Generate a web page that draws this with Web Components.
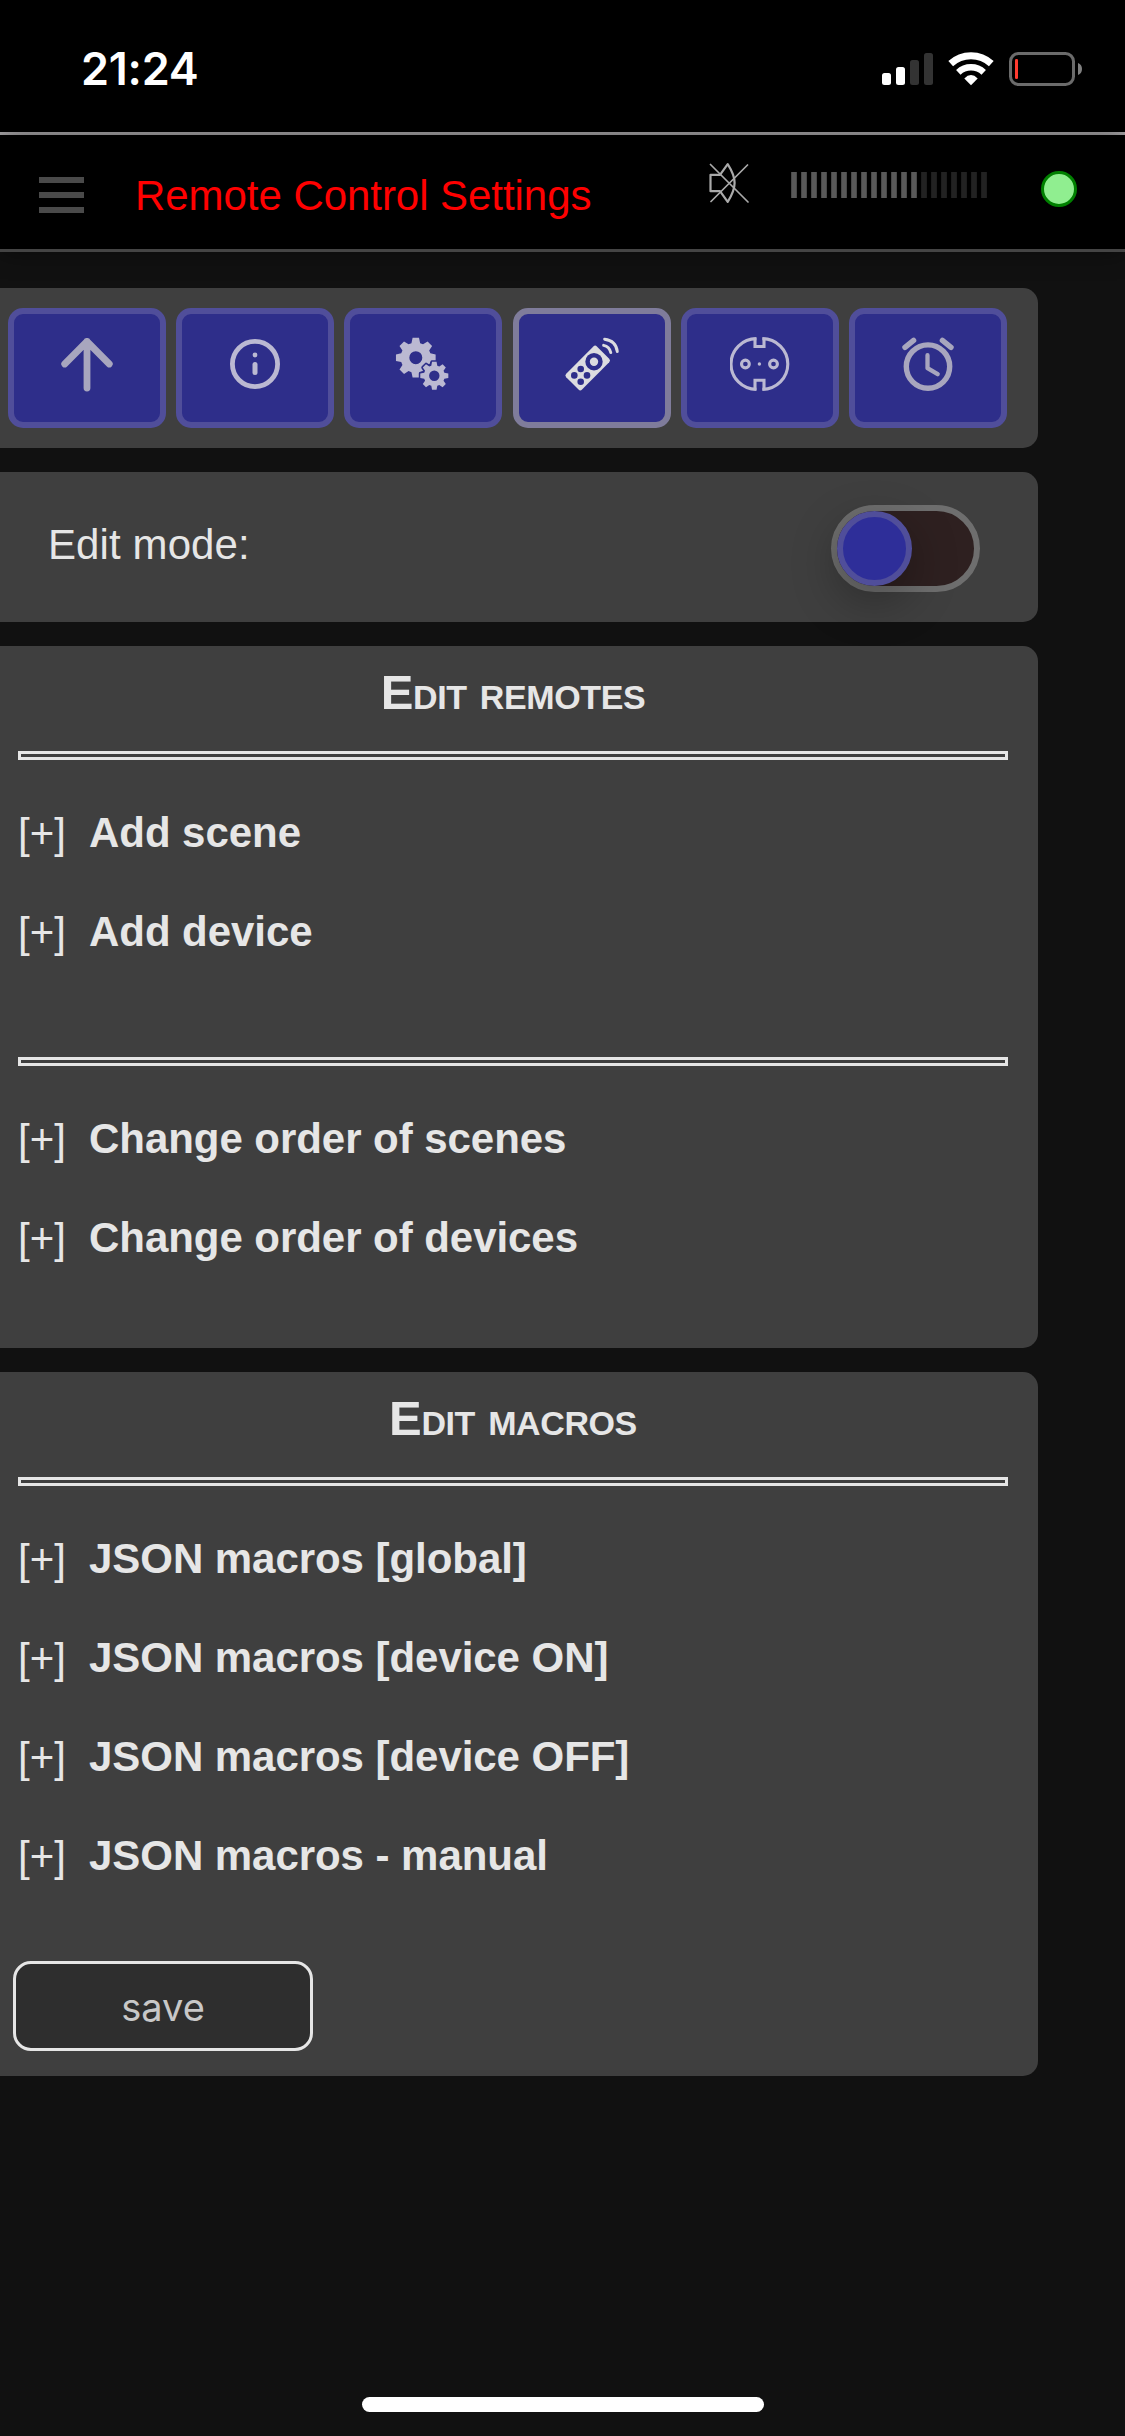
<!DOCTYPE html>
<html lang="en">
<head>
<meta charset="utf-8">
<title>Remote Control Settings</title>
<style>
html,body{margin:0;background:#111}
body{width:1125px;height:2436px;overflow:hidden;font-family:"Liberation Sans",Arial,sans-serif;font-size:42px;color:#e6e6e6}
</style>
</head>
<body>
<remote-app></remote-app>
<script>
const define=(name,html,setup)=>{
  const t=document.createElement('template');
  t.innerHTML=html;
  customElements.define(name,class extends HTMLElement{
    constructor(){
      super();
      this.attachShadow({mode:'open'}).append(t.content.cloneNode(true));
    }
    connectedCallback(){ if(setup) setup(this,this.shadowRoot); }
  });
};

/* Outline of a gear with eight trapezoid teeth and a round hole */
const gear=(cx,cy,outer,body,hole)=>{
  const pts=[];
  for(let i=0;i<8;i++){
    const a=i*Math.PI/4;
    [[-.29,body],[-.16,outer],[.16,outer],[.29,body]].forEach(([d,r])=>
      pts.push((cx+r*Math.cos(a+d)).toFixed(2)+' '+(cy+r*Math.sin(a+d)).toFixed(2)));
  }
  return `M${pts.join('L')}ZM${cx-hole} ${cy}a${hole} ${hole} 0 1 0 ${2*hole} 0a${hole} ${hole} 0 1 0 ${-2*hole} 0Z`;
};

const icons={
  up:`<svg viewBox="57 334 60 60" fill="none" stroke="#a8a6be" stroke-width="6.8" stroke-linecap="round" stroke-linejoin="round"><path d="M87 388V341.500M64.700 364L87 341.500L109.300 364"/></svg>`,
  info:`<svg viewBox="225 334 60 60" fill="none" stroke="#bbb9d2"><circle cx="255" cy="364" r="22.600" stroke-width="4.800"/><path d="M255 364.500V372.500" stroke-width="5" stroke-linecap="round"/><circle cx="255" cy="355" r="2.400" fill="#bbb9d2" stroke="none"/></svg>`,
  gears:`<svg viewBox="393.500 334 60 60" fill="#bbb9d2" fill-rule="evenodd" stroke-linejoin="round"><path d="${gear(416.3,357.7,20.1,15.2,6.5)}"/><path d="${gear(434.8,375.7,14,10.5,5.2)}" fill="#2e2e8a" stroke="#2e2e8a" stroke-width="3.400"/><circle cx="434.800" cy="375.700" r="8" fill="#2e2e8a"/><path d="${gear(434.8,375.7,14.2,10.5,5.2)}"/></svg>`,
  remote:`<svg viewBox="562 334 60 60" fill="#dcdce0"><g transform="translate(587.700 368) rotate(45)"><rect x="-11.200" y="-21.700" width="22.400" height="43.400" rx="2.500"/></g><g fill="#2e2e8a"><circle cx="594" cy="361.700" r="8.700"/><circle cx="580.700" cy="369" r="3.300"/><circle cx="574.300" cy="375.400" r="3.300"/><circle cx="587" cy="375.400" r="3.300"/><circle cx="580.700" cy="381.800" r="3.300"/></g><circle cx="594" cy="361.700" r="4.200"/><g fill="none" stroke="#dcdce0" stroke-width="2.900" stroke-linecap="round"><path d="M603.600 345.300Q609.500 346.600 610.800 352.600"/><path d="M604.600 339.200Q616 340.500 617.300 351.600"/></g></svg>`,
  socket:`<svg viewBox="730 334 60 60" fill="none" stroke="#bbb9d2" stroke-width="3.100"><path d="M756.400 338.600A25.200 25.200 0 0 0 756.400 389.400M762.400 338.600A25.200 25.200 0 0 1 762.400 389.400"/><path d="M755 337.700V346.500H764V337.700M755 390.300V380.200H764V390.300"/><circle cx="745.400" cy="364" r="3.900"/><circle cx="773.500" cy="364" r="3.900"/><circle cx="759.400" cy="364" r="1.700" fill="#bbb9d2" stroke="none"/></svg>`,
  alarm:`<svg viewBox="898 334 60 60" fill="none" stroke="#a8a6be" stroke-linecap="round" stroke-linejoin="round"><circle cx="928" cy="366.600" r="21.700" stroke-width="5.400"/><path d="M927.500 355.200V368.200L937.700 374.200" stroke-width="4.300"/><path d="M905 347.300L913.600 340.400M951 347.300L942.400 340.400" stroke-width="5.400"/></svg>`
};

define('status-bar',`<style>
:host{display:flex;box-sizing:border-box;height:135px;border-bottom:3px solid #a8a6a8;background:#000;justify-content:space-between;padding:46px 43px 0 81px}
.time{font:600 45px/46px Inter,sans-serif;color:#fff;letter-spacing:-.25px}
svg{display:block;width:202px;height:40px}
</style>
<span class="time">21:24</span>
<svg viewBox="880 46 202 40"><g fill="#fff"><rect x="882" y="73" width="9" height="12" rx="2.500"/><rect x="896" y="67" width="9" height="18" rx="2.500"/></g><g fill="#333"><rect x="910" y="60" width="9" height="25" rx="2.500"/><rect x="924" y="53" width="9" height="32" rx="2.500"/></g>
<g fill="none" stroke="#fff"><path d="M950.700 63.700A30 30 0 0 1 991.300 63.700" stroke-width="7"/><path d="M958.300 72.300A18.500 18.500 0 0 1 983.700 72.300" stroke-width="6.500"/></g><path d="M964.300 78.500Q971 71.700 977.700 78.500L971 85.200Z" fill="#fff"/>
<rect x="1010.500" y="53.500" width="63" height="31" rx="8" fill="none" stroke="#6b6b6b" stroke-width="3"/><rect x="1015" y="59" width="3" height="20" rx="1.300" fill="#ff3b30"/><path d="M1078 63Q1082 64.500 1082 69Q1082 73.500 1078 75Z" fill="#808080"/></svg>`);

define('volume-meter',`<style>
:host{display:flex;gap:4px;height:26px}
i{width:6px;box-sizing:border-box;background:#595959;border:solid #484848;border-width:0 1px}
i.off{background:#222;border-color:#1d1d1d}
</style>`,(el,root)=>{
  for(let n=0;n<20;n++){
    const bar=document.createElement('i');
    if(n>=+el.getAttribute('level')) bar.className='off';
    root.append(bar);
  }
});

define('app-header',`<style>
:host{display:flex;box-sizing:border-box;height:117px;background:#000;border-bottom:3px solid #444;box-shadow:0 0 24px rgba(0,0,0,.45);align-items:flex-start;padding-left:39px;position:relative}
.menu{display:flex;flex-direction:column;gap:9px;width:45px;padding-top:42px}
.menu i{height:6px;background:#4a4a4a}
.title{color:#f00;font-size:42px;line-height:48px;letter-spacing:-.05px;margin:37px 0 0 51px;width:574px;white-space:nowrap}
.mute{display:block;width:40px;height:40px;margin-top:28px}
volume-meter{margin:37px 0 0 42px}
.led{box-sizing:border-box;width:36px;height:36px;border:3px solid #008000;border-radius:50%;background:#90ee90;margin:36px 0 0 54px}
</style>
<div class="menu"><i></i><i></i><i></i></div>
<div class="title"><slot></slot></div>
<svg class="mute" viewBox="709 163 40 40" fill="none" stroke="#aaa" stroke-linejoin="round" stroke-linecap="round"><path d="M720 174.800H710.500V191.200H720L727.700 201.800Q734.600 191 734.600 183Q734.600 175 727.700 164.200Z" stroke-width="2.200"/><path d="M710.500 164.500L748 202M711 201.500L747.500 165" stroke-width="1.700"/></svg>
<volume-meter level="13"></volume-meter>
<span class="led"></span>`);

define('ui-card',`<style>
:host{display:block;box-sizing:border-box;width:1038px;background:#3f3f3f;border-radius:0 15px 15px 0}
</style><slot></slot>`);

define('nav-button',`<style>
:host{display:flex;box-sizing:border-box;width:158px;height:120px;border:6px solid #504e9a;border-radius:15px;background:#2e2e8a;align-items:center;justify-content:center;padding-bottom:8px}
:host([active]){border-color:#7f7c9b}
svg{display:block;width:60px;height:60px}
</style><span></span>`,(el,root)=>{root.querySelector('span').innerHTML=icons[el.getAttribute('icon')];});

define('nav-bar',`<style>
:host{display:flex;gap:10.200px;padding:20px 0 20px 8px}
</style><slot></slot>`);

define('toggle-switch',`<style>
:host{display:flex;box-sizing:border-box;width:149px;height:87px;border:6px solid #6e6e6e;border-radius:44px;background:#2e2020}
i{box-sizing:border-box;width:75px;height:75px;border-radius:50%;border:6px solid #504e9a;background:#2e2e99;box-shadow:0 15px 48px rgba(0,0,0,.32)}
</style><i></i>`);

define('setting-row',`<style>
:host{display:flex;height:150px;padding:0 58px 0 48px;justify-content:space-between;align-items:flex-start}
.label{line-height:48px;margin-top:49px;letter-spacing:.1px}
toggle-switch{margin-top:33px}
</style><span class="label"><slot></slot></span><toggle-switch></toggle-switch>`);

define('section-title',`<style>
:host{display:block;width:1026px;text-align:center;font-weight:bold;font-size:49px;letter-spacing:-.4px;line-height:92px;font-variant:small-caps}
</style><slot></slot>`);

define('double-rule',`<style>
:host{display:block;box-sizing:border-box;width:990px;height:9px;border:3px solid #e6e6e6;margin:13px 0 23px 18px}
</style>`);

define('fold-item',`<style>
:host{display:flex;height:99px;line-height:99px;padding-left:18px;white-space:nowrap}
.sign{width:71px;padding-top:1px}
b{font-weight:bold;letter-spacing:-.05px}
</style><span class="sign">[+]</span><b><slot></slot></b>`);

define('save-button',`<style>
:host{display:flex;box-sizing:border-box;width:300px;height:90px;border:3px solid #e6e6e6;border-radius:18px;background:#2e2e2e;color:#c8c8c8;align-items:center;justify-content:center;font:400 38px/48px Inter,sans-serif;padding-top:1px;margin:56px 0 0 13px}
</style><slot></slot>`);

define('home-indicator',`<style>
:host{display:block;width:402px;height:15px;border-radius:8px;background:#fff;margin:321px 0 0 362px}
</style>`);

define('remote-app',`<style>
:host{display:block}
main{display:flex;flex-direction:column;gap:24px;padding-top:36px}
.remotes{height:702px}
.macros{height:704px}
.second{margin-top:76px}
</style>
<status-bar></status-bar>
<app-header>Remote Control Settings</app-header>
<main>
<ui-card><nav-bar>
<nav-button icon="up"></nav-button><nav-button icon="info"></nav-button><nav-button icon="gears"></nav-button><nav-button icon="remote" active></nav-button><nav-button icon="socket"></nav-button><nav-button icon="alarm"></nav-button>
</nav-bar></ui-card>
<ui-card><setting-row>Edit mode:</setting-row></ui-card>
<ui-card class="remotes">
<section-title>Edit remotes</section-title>
<double-rule></double-rule>
<fold-item>Add scene</fold-item>
<fold-item>Add device</fold-item>
<double-rule class="second"></double-rule>
<fold-item>Change order of scenes</fold-item>
<fold-item>Change order of devices</fold-item>
</ui-card>
<ui-card class="macros">
<section-title>Edit macros</section-title>
<double-rule></double-rule>
<fold-item>JSON macros [global]</fold-item>
<fold-item>JSON macros [device ON]</fold-item>
<fold-item>JSON macros [device OFF]</fold-item>
<fold-item>JSON macros - manual</fold-item>
<save-button>save</save-button>
</ui-card>
</main>
<home-indicator></home-indicator>`);
</script>
</body>
</html>
